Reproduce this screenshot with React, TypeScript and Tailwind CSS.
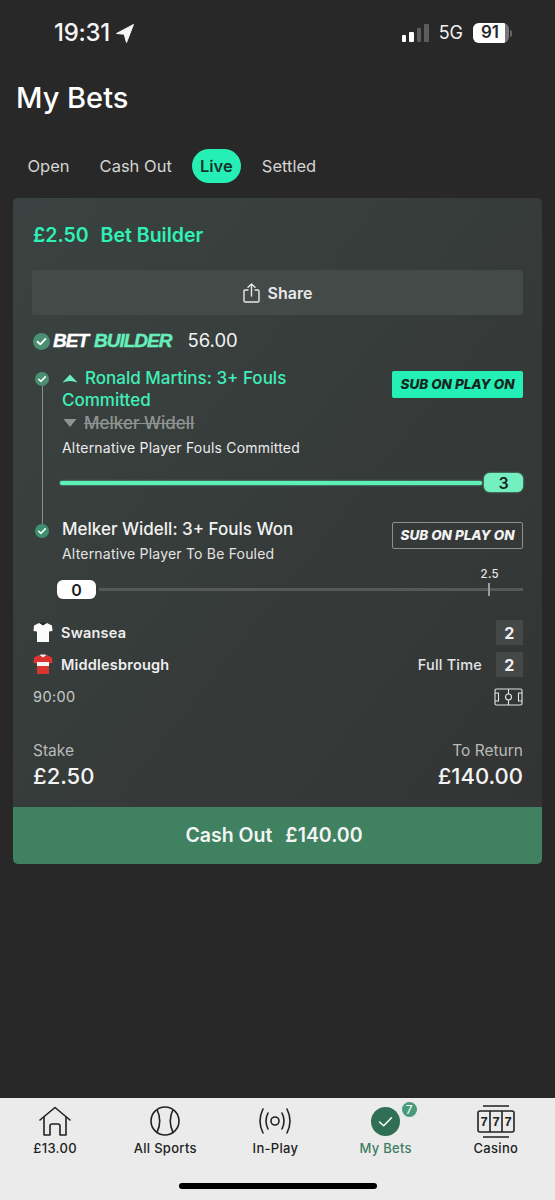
import React from "react";

const font = { fontFamily: "Inter, 'Liberation Sans', sans-serif" };

function Check({ size = 18, bg = "#4a8f72", stroke = "#ffffff" }: { size?: number; bg?: string; stroke?: string }) {
  return (
    <svg width={size} height={size} viewBox="0 0 18 18" className="shrink-0">
      <circle cx="9" cy="9" r="9" fill={bg} />
      <path d="M4.8 9.3 L7.7 12 L13.2 6.3" fill="none" stroke={stroke} strokeWidth="2" strokeLinecap="round" strokeLinejoin="round" />
    </svg>
  );
}

function Shirt({ body, collar, stripe }: { body: string; collar: string; stripe?: string }) {
  return (
    <svg width="20" height="21" viewBox="0 0 20 21" className="shrink-0">
      <path d="M6 1 L1 3.5 L0.5 9 L4 9.5 L4 20 L16 20 L16 9.5 L19.5 9 L19 3.5 L14 1 L10 3 Z" fill={body} />
      <path d="M6.5 1 L10 3.6 L13.5 1 L12 0.6 L8 0.6 Z" fill={collar} />
      {stripe && <rect x="4" y="8" width="12" height="4" fill={stripe} />}
    </svg>
  );
}

function Tri({ up, color }: { up: boolean; color: string }) {
  return (
    <svg width="16" height="10" viewBox="0 0 16 10" className="shrink-0">
      <path d={up ? "M8 0.5 L15.5 8.5 Q8 5.5 0.5 8.5 Z" : "M1.5 1 L14.5 1 L8 9 Z"} fill={color} />
    </svg>
  );
}

function Nav({ icon, label, active }: { icon: React.ReactNode; label: string; active?: boolean }) {
  return (
    <div className="flex w-[110.2px] flex-col items-center">
      <div className="flex h-[34px] items-center justify-center">{icon}</div>
      <span className={`mt-[2px] text-[13px] leading-[16px] font-medium tracking-[0.3px] ${active ? "text-[#3f7d62]" : "text-[#222222]"}`}>{label}</span>
    </div>
  );
}

export default function App() {
  return (
    <div style={font} className="flex min-h-[1200px] w-[555px] flex-col bg-[#282828] text-white">
      {/* status bar */}
      <div className="flex h-[66px] items-center justify-between pr-[43px] pl-[54px]">
        <div className="flex items-center gap-[6px]">
          <span className="text-[24px] leading-none font-medium tracking-[-0.3px] text-[#f5f5f5]">19:31</span>
          <svg width="18" height="19" viewBox="0 0 18 19">
            <path d="M17.5 0.5 L0.5 9.5 L8.2 10.2 L10.5 18.5 Z" fill="#f5f5f5" stroke="#f5f5f5" strokeLinejoin="round" />
          </svg>
        </div>
        <div className="flex items-center">
          <div className="flex items-end gap-[3px]">
            <div className="h-[7px] w-[4.5px] rounded-[1px] bg-white" />
            <div className="h-[10px] w-[4.5px] rounded-[1px] bg-white" />
            <div className="h-[14px] w-[4.5px] rounded-[1px] bg-[#5c5c5c]" />
            <div className="h-[18px] w-[4.5px] rounded-[1px] bg-[#5c5c5c]" />
          </div>
          <span className="ml-[10px] text-[18px] leading-none font-normal text-[#f0f0f0]">5G</span>
          <div className="ml-[10px] flex h-[20px] w-[36px] overflow-hidden rounded-[6px] bg-[#777777]">
            <div className="flex h-[20px] w-[32px] items-center justify-center bg-white pl-[2px] text-[17px] font-semibold text-[#282828]">91</div>
          </div>
          <div className="ml-[1px] h-[7px] w-[2px] rounded-r-[2px] bg-[#666666]" />
        </div>
      </div>

      <h1 className="mt-[14px] pl-[16px] text-[29px] leading-[36px] font-medium text-white">My Bets</h1>

      {/* tabs */}
      <div className="mt-[33px] flex h-[34px] items-center pl-[27.5px] text-[16.5px] text-[#d4d4d4]">
        <span>Open</span>
        <span className="ml-[30px]">Cash Out</span>
        <span className="ml-[20px] flex h-[34px] w-[49px] items-center justify-center rounded-full bg-[#26efb5] font-semibold text-[#16352c]">Live</span>
        <span className="ml-[21px]">Settled</span>
      </div>

      {/* card */}
      <div className="mx-[13px] mt-[15px] overflow-hidden rounded-[5px] bg-gradient-to-br from-[#3a4341] to-[#323433]">
        <div className="px-[19px]">
          <div className="flex h-[72px] items-center gap-[12px] pt-[3px] pl-[1px] text-[19.5px] font-semibold text-[#30f0b6]">
            <span>£2.50</span>
            <span>Bet Builder</span>
          </div>
          <div className="flex h-[45px] items-center justify-center gap-[8px] rounded-[3px] bg-[#444a48] text-[16px] font-semibold text-[#e8e8e8]">
            <svg width="17" height="20" viewBox="0 0 17 20" fill="none" stroke="#e8e8e8" strokeWidth="1.4" strokeLinecap="round" strokeLinejoin="round">
              <path d="M5 7 H2.2 Q1 7 1 8.2 V17.8 Q1 19 2.2 19 H14.8 Q16 19 16 17.8 V8.2 Q16 7 14.8 7 H12" />
              <path d="M8.5 13 V1 M5 4.2 L8.5 1 L12 4.2" />
            </svg>
            <span>Share</span>
          </div>

          <div className="mt-[16px] flex h-[20px] items-center pl-[1px]">
            <Check size={17} />
            <span className="ml-[3px] font-['Liberation_Sans'] text-[19px] font-bold tracking-[-1px] text-white italic [-webkit-text-stroke:0.4px_#ffffff]">BET</span>
            <span className="ml-[6px] font-['Liberation_Sans'] text-[19px] font-bold tracking-[-1px] text-[#66eebc] italic [-webkit-text-stroke:0.4px_#66eebc]">BUILDER</span>
            <span className="ml-[16px] text-[18.5px] font-normal text-[#f2f2f2]">56.00</span>
          </div>

          {/* leg one */}
          <div className="mt-[16px] flex">
            <div className="flex w-[30px] shrink-0 flex-col pt-[5px] pl-[3px]">
              <Check size={14} bg="#4a8f72" />
              <div className="ml-[6.5px] w-[1px] flex-1 bg-[#8b908e]" />
            </div>
            <div className="min-w-0 flex-1 pb-[25.5px]">
              <div className="flex justify-between">
                <div className="w-[290px]">
                  <div className="text-[17px] leading-[22px] font-medium text-[#40efb8]">
                    <span className="mr-[7px] inline-block"><Tri up color="#6cefc0" /></span>
                    Ronald Martins: 3+ Fouls Committed
                  </div>
                  <div className="mt-[1px] flex items-center gap-[6px] text-[17px] leading-[22px] font-medium text-[#8f9492]">
                    <Tri up={false} color="#8f9492" />
                    <span className="line-through">Melker Widell</span>
                  </div>
                </div>
                <div className="mt-[3.5px] flex h-[27px] w-[131px] items-center justify-center rounded-[2px] bg-[#24efb4] text-[13.5px] font-extrabold text-[#16251f] italic">SUB ON PLAY ON</div>
              </div>
              <div className="mt-[3.5px] text-[14px] leading-[20px] tracking-[0.2px] text-[#ececec]">Alternative Player Fouls Committed</div>
              <div className="mt-[15px] -ml-[2px] flex h-[20px] items-center">
                <div className="h-[4px] flex-1 rounded-full bg-[#5ff0b8] shadow-[0_0_2px_#5ff0b8]" />
                <div className="ml-[2px] flex h-[19px] w-[39px] items-center justify-center rounded-[6px] bg-[#74f0c0] text-[16px] font-semibold text-[#16251f] shadow-[0_0_2px_#5ff0b8]">3</div>
              </div>
            </div>
          </div>

          {/* leg two */}
          <div className="flex">
            <div className="flex w-[30px] shrink-0 flex-col pl-[3px]">
              <div className="ml-[6.5px] h-[6px] w-[1px] bg-[#8b908e]" />
              <Check size={14} bg="#3f9071" />
            </div>
            <div className="min-w-0 flex-1">
              <div className="flex justify-between">
                <div>
                  <div className="text-[17px] leading-[22px] font-medium text-[#f2f2f2]">Melker Widell: 3+ Fouls Won</div>
                  <div className="mt-[4px] text-[14px] leading-[20px] tracking-[0.2px] text-[#e4e4e4]">Alternative Player To Be Fouled</div>
                </div>
                <div className="mt-[4px] flex h-[27px] w-[131px] items-center justify-center rounded-[2px] border border-[#8b908e] text-[13.5px] font-extrabold text-[#f2f2f2] italic">SUB ON PLAY ON</div>
              </div>
            </div>
          </div>
          <div className="mt-[3px] flex justify-end pr-[24px] text-[11.5px] leading-[14px] font-medium tracking-[0.3px] text-[#e4e4e4]">2.5</div>
          <div className="-mt-[1px] ml-[25px] flex h-[19px] items-center">
            <div className="flex h-[19px] w-[39px] items-center justify-center rounded-[6px] bg-white text-[16px] font-semibold text-[#1e1e1e]">0</div>
            <div className="relative ml-[3px] h-[3px] flex-1 bg-[#555a58]">
              <div className="absolute top-[-5px] right-[33px] h-[13px] w-[2px] bg-[#9a9e9c]" />
            </div>
          </div>

          {/* teams */}
          <div className="mt-[21px] flex h-[25px] items-center pl-[1px] text-[14.5px] font-semibold tracking-[0.2px] text-[#eeeeee]">
            <Shirt body="#fbfbfb" collar="#2a2a2a" />
            <span className="ml-[8px] flex-1">Swansea</span>
            <div className="flex h-[25px] w-[27px] items-center justify-center bg-[#444846] text-[16px] font-bold">2</div>
          </div>
          <div className="mt-[7px] flex h-[25px] items-center pl-[1px] text-[14.5px] font-semibold tracking-[0.2px] text-[#eeeeee]">
            <Shirt body="#d8352f" collar="#f2f2f2" stripe="#f4f4f4" />
            <span className="ml-[8px] flex-1">Middlesbrough</span>
            <span className="mr-[14px] text-[14.5px] font-medium text-[#e4e4e4]">Full Time</span>
            <div className="flex h-[25px] w-[27px] items-center justify-center bg-[#444846] text-[16px] font-bold">2</div>
          </div>
          <div className="mt-[11px] flex h-[18px] items-center justify-between pl-[1px] text-[14.5px] tracking-[0.4px] text-[#c6c8c7]">
            <span>90:00</span>
            <svg width="29" height="18" viewBox="0 0 29 18" fill="none" stroke="#e4e4e4" strokeWidth="1.1">
              <rect x="1" y="1" width="27" height="16" rx="1.5" />
              <path d="M14.5 1 V6 M14.5 12 V17" />
              <circle cx="14.5" cy="9" r="3" />
              <path d="M1 5 H4.5 V13 H1 M28 5 H24.5 V13 H28" />
            </svg>
          </div>

          {/* stake */}
          <div className="mt-[35px] flex justify-between pl-[1px]">
            <div>
              <div className="text-[15.5px] leading-[20px] text-[#b8bbba]">Stake</div>
              <div className="mt-[2px] text-[22px] leading-[26px] font-medium text-[#f4f4f4]">£2.50</div>
            </div>
            <div className="text-right">
              <div className="text-[15.5px] leading-[20px] text-[#b8bbba]">To Return</div>
              <div className="mt-[2px] text-[22px] leading-[26px] font-medium text-[#f4f4f4]">£140.00</div>
            </div>
          </div>
        </div>
        <div className="mt-[18px] flex h-[57px] items-center justify-center gap-[13px] bg-[#3f8160] pr-[7px] text-[19.5px] font-semibold text-[#f4f4f4]">
          <span>Cash Out</span>
          <span>£140.00</span>
        </div>
      </div>

      {/* bottom nav */}
      <div className="mt-auto h-[102px] bg-[#ebebeb] pt-[6px]">
        <div className="flex">
          <Nav
            label="£13.00"
            icon={
              <svg width="32" height="30" viewBox="0 0 32 30" fill="none" stroke="#222" strokeWidth="1.6" strokeLinejoin="round" strokeLinecap="round">
                <path d="M1 14 L16 1.5 L31 14" />
                <path d="M5 11 V29 H11 V20 Q11 18 13 18 H19 Q21 18 21 20 V29 H27 V11" />
              </svg>
            }
          />
          <Nav
            label="All Sports"
            icon={
              <svg width="30" height="30" viewBox="0 0 30 30" fill="none" stroke="#222" strokeWidth="1.6">
                <circle cx="15" cy="15" r="14" />
                <path d="M7 3.5 Q12.5 15 7 26.5 M23 3.5 Q17.5 15 23 26.5" />
              </svg>
            }
          />
          <Nav
            label="In-Play"
            icon={
              <svg width="36" height="26" viewBox="0 0 36 26" fill="none" stroke="#222" strokeWidth="1.6" strokeLinecap="round">
                <circle cx="18" cy="13" r="4" />
                <path d="M6 1 Q0 13 6 25 M30 1 Q36 13 30 25 M11 5 Q7 13 11 21 M25 5 Q29 13 25 21" />
              </svg>
            }
          />
          <div className="relative">
            <Nav
              label="My Bets"
              active
              icon={
                <svg width="29" height="29" viewBox="0 0 29 29" className="shrink-0">
                  <circle cx="14.5" cy="14.5" r="14.5" fill="#2f6f55" />
                  <path d="M8.5 15 L12.7 18.8 L20.5 10.8" fill="none" stroke="#ffffff" strokeWidth="1.5" strokeLinecap="round" strokeLinejoin="round" />
                </svg>
              }
            />
            <div className="absolute top-[-2px] left-[71px] flex h-[15px] w-[15px] items-center justify-center rounded-full bg-[#4a9b7c] text-[12px] text-white">7</div>
          </div>
          <Nav
            label="Casino"
            icon={
              <svg width="38" height="33" viewBox="0 0 38 33" fill="none" stroke="#222" strokeWidth="1.6">
                <rect x="1" y="6" width="36" height="21" rx="2" />
                <path d="M13 6 V27 M25 6 V27 M6 1 H32 M6 32 H32" />
                <g fill="#222222" stroke="none" fontFamily="'Liberation Sans', sans-serif" fontWeight="700" fontSize="13" textAnchor="middle">
                  <text x="7" y="21">7</text>
                  <text x="19" y="21">7</text>
                  <text x="31" y="21">7</text>
                </g>
              </svg>
            }
          />
        </div>
        <div className="mx-auto mt-[27px] h-[6px] w-[198px] rounded-full bg-black" />
      </div>
    </div>
  );
}
